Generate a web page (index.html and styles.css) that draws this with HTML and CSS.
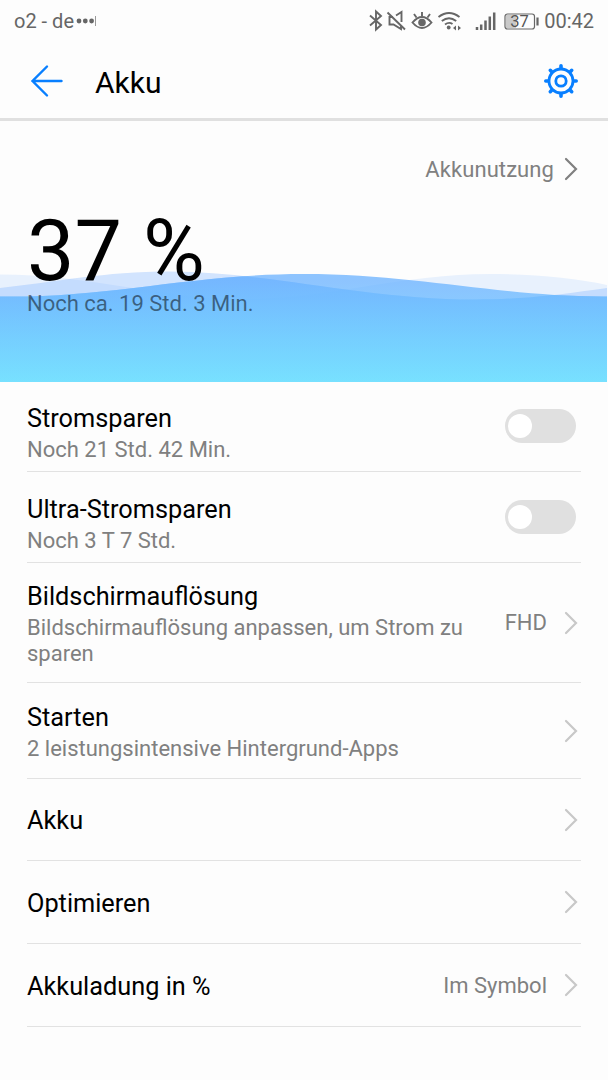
FILE: index.html
```
<!DOCTYPE html>
<html lang="de">
<head>
    <meta charset="UTF-8" />
    <meta name="viewport" content="width=device-width, initial-scale=1.0" />
    <title>Akku</title>
    <link rel="stylesheet" href="styles.css">
</head>
<body>
  <div class="statusbar">
    <span class="carrier">o2 - de</span>
    <svg class="dots" width="22" height="12" viewBox="0 0 22 12" fill="#666">
      <circle cx="3" cy="6" r="2.4" /><circle cx="9.3" cy="6" r="2.4" /><circle cx="15.6" cy="6" r="2.4" />
      <path d="M19.500 1v10" stroke="#999" stroke-width="1" />
    </svg>
    <svg class="status-icons" width="176" height="24" viewBox="0 0 176 24" fill="none" stroke="#666" stroke-width="1.900">
      <!-- bluetooth -->
      <path d="M2 6.500l11 9.500-5 4.500V2.500l5 4.500-11 9.500" />
      <!-- muted speaker -->
      <path d="M19.500 3.500L37 20.500M25 8h-3.500v7.500h4l7.500 4.500v-3.500M28 6.500l5.500-3.500v10" />
      <!-- eye -->
      <path d="M44.500 13.500q9.500-11 19 0-9.500 11-19 0zM54 3v4M46 5l2.500 3.500M62 5l-2.500 3.500" />
      <circle cx="54" cy="13.500" r="3.800" fill="#666" stroke="none" />
      <!-- wifi -->
      <path d="M70.500 8q10.500-8 21 0M73.800 12q7.200-5.500 14.400 0M77 15.500q4-3 7.500-.5" />
      <circle cx="80.700" cy="18.500" r="1.900" fill="#666" stroke="none" />
      <path d="M88 16.500v5l-3-2.500zM90 16.500v5l3-2.500z" fill="#666" stroke="none" />
      <!-- signal -->
      <path d="M109 18v3M113.200 15.500V21M117.500 11.500V21M121.800 7.500V21M126.200 3.500V21" stroke-width="2.500" />
      <!-- battery -->
      <rect x="138" y="6" width="10" height="13" fill="#c9c9c9" stroke="none" />
      <rect x="137" y="5" width="29.500" height="15" rx="2.500" stroke-width="1.200" />
      <path d="M169.500 8.500v8" stroke-width="2.200" />
      <text class="battery-level" x="151.500" y="18">37</text>
    </svg>
    <span class="clock">00:42</span>
  </div>

  <header>
    <svg class="back" width="34" height="34" viewBox="0 0 34 34">
      <path d="M17 2.500L2.500 17 17 31.500M2.500 17h29" />
    </svg>
    <h1>Akku</h1>
    <svg class="settings" width="36" height="36" viewBox="-18 -18 36 36">
      <circle r="12" /><circle r="5.200" />
      <path d="M0-13v-2.200M0 13v2.200M-13 0h-2.200M13 0h2.200M-9.300-9.300l-1.400-1.400M9.300 9.300l1.400 1.400M-9.300 9.300l-1.400 1.400M9.300-9.300l1.400-1.400" />
    </svg>
  </header>

  <section class="battery">
    <svg class="waves" width="607" height="112" viewBox="0 0 607 112">
      <defs>
        <linearGradient id="water" gradientUnits="userSpaceOnUse" x1="0" y1="10" x2="0" y2="112">
          <stop offset="0" stop-color="#6bb2ff" />
          <stop offset="1" stop-color="#6fe1ff" />
        </linearGradient>
        <path id="middle" d="M0 18C55 12 105 1.500 170 1.500 265 1.500 365 29.500 475 29.500 525 29.500 565 24 607 18V112H0z" />
        <path id="front" d="M0 26.500C110 28 190 4 304 4S500 27 607 26.500V112H0z" />
        <clipPath id="front-clip"><use href="#front" /></clipPath>
      </defs>
      <path class="wave-back" d="M0 4.500C90 4.500 160 29 245 29S400 4 490 4C535 4 575 8 607 15V112H0z" />
      <use class="wave-middle" href="#middle" />
      <use class="wave-front" href="#front" />
      <!-- deeper water where the two waves lie over each other -->
      <use class="wave-shade" href="#middle" clip-path="url(#front-clip)" />
    </svg>
    <a class="usage" href="#">Akkunutzung
      <svg class="chevron dark" width="14" height="24" viewBox="0 0 14 24"><path d="M2 2l10 10L2 22" /></svg>
    </a>
    <div class="percent">37 %</div>
    <div class="remaining">Noch ca. 19 Std. 3 Min.</div>
  </section>

  <main>
    <div class="row row-switch">
      <div class="text">
        <h2>Stromsparen</h2>
        <p>Noch 21 Std. 42 Min.</p>
      </div>
      <div class="switch"></div>
    </div>
    <div class="row row-switch">
      <div class="text">
        <h2>Ultra-Stromsparen</h2>
        <p>Noch 3 T 7 Std.</p>
      </div>
      <div class="switch"></div>
    </div>
    <div class="row row-tall">
      <div class="text">
        <h2>Bildschirmauflösung</h2>
        <p>Bildschirmauflösung anpassen, um Strom zu sparen</p>
      </div>
      <span class="value">FHD</span>
      <svg class="chevron" width="14" height="24" viewBox="0 0 14 24"><path d="M2 2l10 10L2 22" /></svg>
    </div>
    <div class="row row-medium">
      <div class="text">
        <h2>Starten</h2>
        <p>2 leistungsintensive Hintergrund-Apps</p>
      </div>
      <svg class="chevron" width="14" height="24" viewBox="0 0 14 24"><path d="M2 2l10 10L2 22" /></svg>
    </div>
    <div class="row">
      <div class="text"><h2>Akku</h2></div>
      <svg class="chevron" width="14" height="24" viewBox="0 0 14 24"><path d="M2 2l10 10L2 22" /></svg>
    </div>
    <div class="row">
      <div class="text"><h2>Optimieren</h2></div>
      <svg class="chevron" width="14" height="24" viewBox="0 0 14 24"><path d="M2 2l10 10L2 22" /></svg>
    </div>
    <div class="row">
      <div class="text"><h2>Akkuladung in %</h2></div>
      <span class="value">Im Symbol</span>
      <svg class="chevron" width="14" height="24" viewBox="0 0 14 24"><path d="M2 2l10 10L2 22" /></svg>
    </div>
  </main>
</body>
</html>
```
FILE: styles.css
```
* {
    margin: 0;
    padding: 0;
    box-sizing: border-box;
}

body {
    font-family: Roboto, sans-serif;
    background: #fdfdfd;
    color: #000;
    min-height: 100vh;
}

.statusbar {
    display: flex;
    align-items: center;
    height: 42px;
    padding: 0 14px;
    font-size: 20px;
    color: #666;
}

.dots {
    margin-left: 2px;
}

.status-icons {
    margin-left: auto;
}

.battery-level {
    font-size: 16.5px;
    fill: #555;
    stroke: none;
    text-anchor: middle;
}

header {
    display: flex;
    align-items: center;
    height: 79px;
    padding: 2px 29px 0 30px;
    border-bottom: 3px solid #e0e0e0;
}

    header svg {
        fill: none;
        stroke: #087fff;
        stroke-linecap: round;
    }

    header h1 {
        flex: 1;
        margin-left: 31px;
        padding-top: 2px;
        font-size: 30px;
        font-weight: 400;
    }

.back {
    stroke-width: 2.4;
}

.settings {
    stroke-width: 2.8;
}

    .settings path {
        stroke-width: 3.6;
    }

.battery {
    position: relative;
    height: 261px;
    padding: 34px 30px 0 27px;
}

.waves {
    position: absolute;
    left: 0;
    bottom: 0;
    z-index: -1;
}

.wave-back {
    fill: #7db4ff;
    opacity: 0.16;
}

.wave-middle {
    fill: #7db4ff;
    opacity: 0.34;
}

.wave-front {
    fill: url(#water);
    opacity: 0.76;
}

.wave-shade {
    fill: url(#water);
    opacity: 0.6;
}

.usage {
    display: flex;
    justify-content: flex-end;
    align-items: center;
    gap: 10px;
    height: 28px;
    font-size: 22px;
    letter-spacing: 0.08px;
    color: #808080;
    text-decoration: none;
}

.percent {
    margin-top: 30px;
    font-size: 84.5px;
    line-height: 78px;
}

.remaining {
    font-size: 22px;
    line-height: 26px;
    padding-top: 0;
    color: rgba(0, 0, 0, 0.5);
}

main {
    padding: 0 27px;
}

.row {
    display: flex;
    align-items: center;
    height: 82.7px;
    padding-right: 3px;
    border-bottom: 1px solid #e2e2e2;
}

.row-switch {
    height: 90.4px;
    padding-right: 5px;
}

.row-tall {
    height: 120px;
    padding-top: 1px;
}

.row-medium {
    height: 96px;
    padding-top: 1px;
}

.text {
    flex: 1;
    padding-top: 2px;
}

    .row-switch .text {
        padding-top: 13px;
    }

    .row-tall .text,
    .row-medium .text {
        padding-top: 3px;
    }

    .text h2 {
        padding-top: 1px;
        font-size: 25.3px;
        font-weight: 400;
        line-height: 30px;
    }

    .text p {
        margin-top: 3px;
        font-size: 22px;
        line-height: 26px;
        color: #808080;
    }

.value {
    margin-right: 17px;
    font-size: 22px;
    color: #808080;
}

.chevron {
    fill: none;
    stroke: #c8c8c8;
    stroke-width: 2.2;
    stroke-linecap: round;
}

    .chevron.dark {
        stroke: #808080;
    }

.switch {
    width: 71px;
    height: 34px;
    margin-top: -1px;
    padding: 5px 3px;
    border-radius: 17px;
    background: #e0e0e0;
}

    .switch::before {
        content: "";
        display: block;
        width: 24px;
        height: 24px;
        border-radius: 50%;
        background: #fff;
    }
```
